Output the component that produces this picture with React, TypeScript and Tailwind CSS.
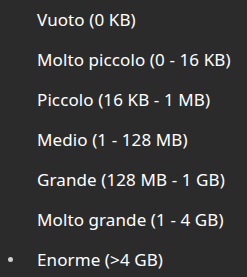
const items = [
  'Vuoto (0 KB)',
  'Molto piccolo (0 - 16 KB)',
  'Piccolo (16 KB - 1 MB)',
  'Medio (1 - 128 MB)',
  'Grande (128 MB - 1 GB)',
  'Molto grande (1 - 4 GB)',
  'Enorme (>4 GB)',
]

export default function App() {
  return (
    <div className="h-[277px] w-[247px] overflow-hidden bg-[#2b2b2b] font-['Noto_Sans',sans-serif] text-white">
      <ul className="-mt-px flex flex-col">
        {items.map((label, i) => (
          <li key={label} className="flex h-10 items-center">
            <span className="flex w-[37px] items-center pl-2">
              {i === items.length - 1 && <span className="h-[5px] w-[5px] rounded-full bg-[#cfcfcf]" />}
            </span>
            <span className="whitespace-nowrap text-[17px] leading-none tracking-[0.1px]">{label}</span>
          </li>
        ))}
      </ul>
    </div>
  )
}
